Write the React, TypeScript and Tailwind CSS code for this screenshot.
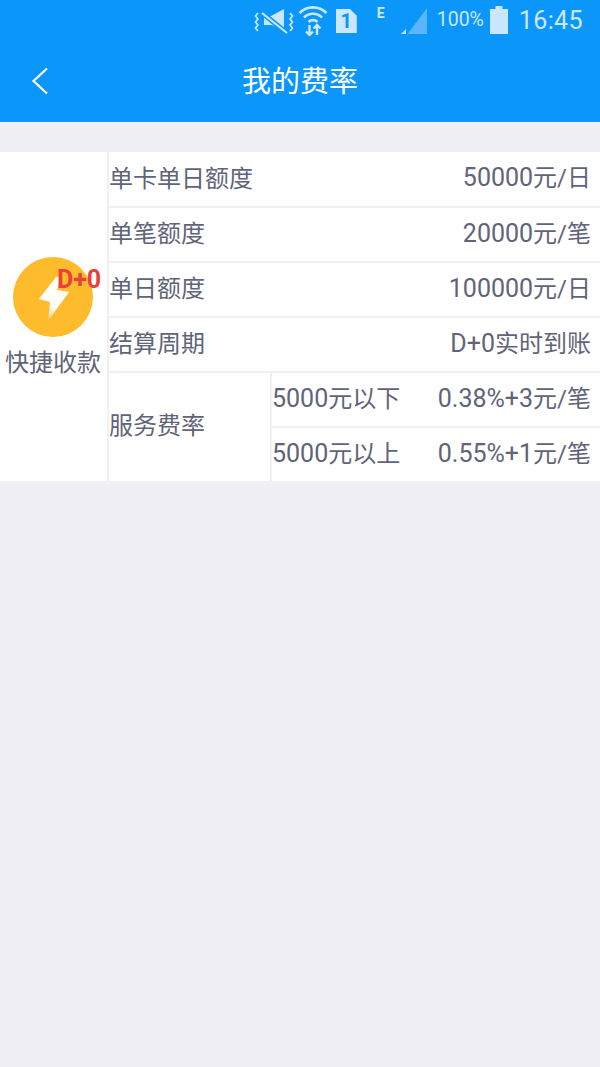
import React from "react";

const font = { fontFamily: '"Roboto","Noto Sans CJK SC",sans-serif' };

function T({ s }: { s: string }) {
  const parts = s.split(/([0-9A-Za-z.%+]+)/);
  return (
    <span className="mb-[2px] whitespace-nowrap">
      {parts.map((p, i) =>
        /^[0-9A-Za-z.%+]+$/.test(p) ? (
          <span key={i} className="text-[25px]">
            {p}
          </span>
        ) : (
          <span key={i}>{p}</span>
        ),
      )}
    </span>
  );
}

function Row({ label, value, first }: { label: string; value: string; first?: boolean }) {
  return (
    <div className={`flex items-center justify-between border-b-2 border-[#f0eff5] pb-[1px] pr-[9px] ${first ? "h-[56px]" : "h-[55px]"}`}>
      <span>{label}</span>
      <T s={value} />
    </div>
  );
}

function StatusIcons() {
  return (
    <div className="flex h-10 items-center justify-end bg-[#0b96fa] pr-[17px] text-[#cbe7fe]">
      <svg width="42" height="32" viewBox="0 0 42 32" fill="none" className="mr-[4px]">
        <path d="M12 12H19L32 5V27L20 21H12Z" fill="#cbe7fe" />
        <path d="M9 8L36 30" stroke="#0b96fa" strokeWidth="5" />
        <path d="M10 9L35 29" stroke="#cbe7fe" strokeWidth="2.200" />
        <path d="M6 9L3.500 12L6 15L3.500 18L6 21L3.500 24L6 27" stroke="#cbe7fe" strokeWidth="1.700" />
        <path d="M38 9L40.500 12L38 15L40.500 18L38 21L40.500 24L38 27" stroke="#cbe7fe" strokeWidth="1.700" />
      </svg>
      <svg width="30" height="32" viewBox="0 0 30 32" fill="none" className="mr-[8px]">
        <path d="M1.500 9C9 1.500 21 1.500 28.500 9" stroke="#cbe7fe" strokeWidth="2.600" />
        <path d="M6 13.500C11 8.500 19 8.500 24 13.500" stroke="#cbe7fe" strokeWidth="2.600" />
        <path d="M10.500 18C13 15.500 17 15.500 19.500 18" stroke="#cbe7fe" strokeWidth="2.600" />
        <path d="M11.500 21V31M8 27.500L11.500 31L15 27.500M19 31V21M15.500 24.500L19 21L22.500 24.500" stroke="#cbe7fe" strokeWidth="2.400" />
      </svg>
      <div className="relative mr-[20px] mt-[2px] h-[24px] w-[21px] bg-[#cbe7fe] [clip-path:polygon(0_0,68%_0,100%_28%,100%_100%,0_100%)]">
        <span className="absolute inset-0 flex items-center justify-center text-[20px] font-bold leading-none text-[#0b96fa]">1</span>
      </div>
      <span className="mb-[14px] mr-[15px] w-[8px] text-[14px] font-bold leading-none">E</span>
      <svg width="28" height="28" viewBox="0 0 28 28" className="mr-[9px] mt-[2px]">
        <path d="M27 1V27H7.500Z" fill="#59b5fc" />
        <path d="M1 27L6 22V27Z" fill="#cbe7fe" />
      </svg>
      <span className="mr-[6px] w-[47px] whitespace-nowrap text-[19.500px]">100%</span>
      <svg width="18" height="28" viewBox="0 0 18 28" className="mr-[11px]">
        <path d="M0 3H5.500V0H12.500V3H18V28H0Z" fill="#cbe7fe" />
      </svg>
      <span className="text-[25px] tracking-[0.4px]">16:45</span>
    </div>
  );
}

export default function App() {
  return (
    <div className="flex min-h-[1067px] w-[600px] flex-col bg-[#f0eff5] text-[24px] leading-none text-[#5f6478]" style={font}>
      <StatusIcons />
      <header className="relative flex h-[82px] items-center justify-center bg-[#0b96fa] pt-[2px]">
        <svg width="18" height="28" viewBox="0 0 18 28" fill="none" className="absolute left-[31px] top-[27px]">
          <path d="M16 1.500L2.500 14L16 26.500" stroke="#fff" strokeWidth="2.200" />
        </svg>
        <h1 className="text-[29px] font-normal text-white">我的费率</h1>
      </header>
      <main className="mt-[30px] flex h-[329px] bg-white">
        <div className="flex w-[109px] shrink-0 flex-col items-center border-r-2 border-[#f0eff5] pr-[1px] pt-[105px]">
          <div className="relative h-[80px] w-[80px] rounded-full bg-[#febb2c]">
            <svg width="80" height="80" viewBox="0 0 80 80" className="absolute inset-0">
              <defs>
                <linearGradient id="bolt" x1="0.7" y1="0" x2="0.3" y2="1">
                  <stop offset="0" stopColor="#fff" stopOpacity="1" />
                  <stop offset="0.65" stopColor="#fff" stopOpacity="1" />
                  <stop offset="1" stopColor="#fff" stopOpacity="0.2" />
                </linearGradient>
                <filter id="soft" x="-20%" y="-20%" width="140%" height="140%">
                  <feGaussianBlur stdDeviation="0.7" />
                </filter>
              </defs>
              <path d="M43 20L26 42L37 45L35 64L56 35L44 33L48 20Z" fill="url(#bolt)" filter="url(#soft)" />
            </svg>
            <span className="absolute left-[44px] top-[10px] whitespace-nowrap text-[25px] font-bold leading-none text-[#e8403a]">D+0</span>
          </div>
          <span className="mt-[14px] whitespace-nowrap">快捷收款</span>
        </div>
        <div className="flex min-w-0 flex-1 flex-col">
          <Row first label="单卡单日额度" value="50000元/日" />
          <Row label="单笔额度" value="20000元/笔" />
          <Row label="单日额度" value="100000元/日" />
          <Row label="结算周期" value="D+0实时到账" />
          <div className="flex flex-1">
            <div className="flex w-[163px] shrink-0 items-center border-r-2 border-[#f0eff5] pb-[2px]">服务费率</div>
            <div className="flex min-w-0 flex-1 flex-col">
              <div className="flex h-[55px] items-center justify-between border-b-2 border-[#f0eff5] pb-[1px] pr-[9px]">
                <T s="5000元以下" />
                <T s="0.38%+3元/笔" />
              </div>
              <div className="flex flex-1 items-center justify-between pb-[1px] pr-[9px]">
                <T s="5000元以上" />
                <T s="0.55%+1元/笔" />
              </div>
            </div>
          </div>
        </div>
      </main>
    </div>
  );
}
